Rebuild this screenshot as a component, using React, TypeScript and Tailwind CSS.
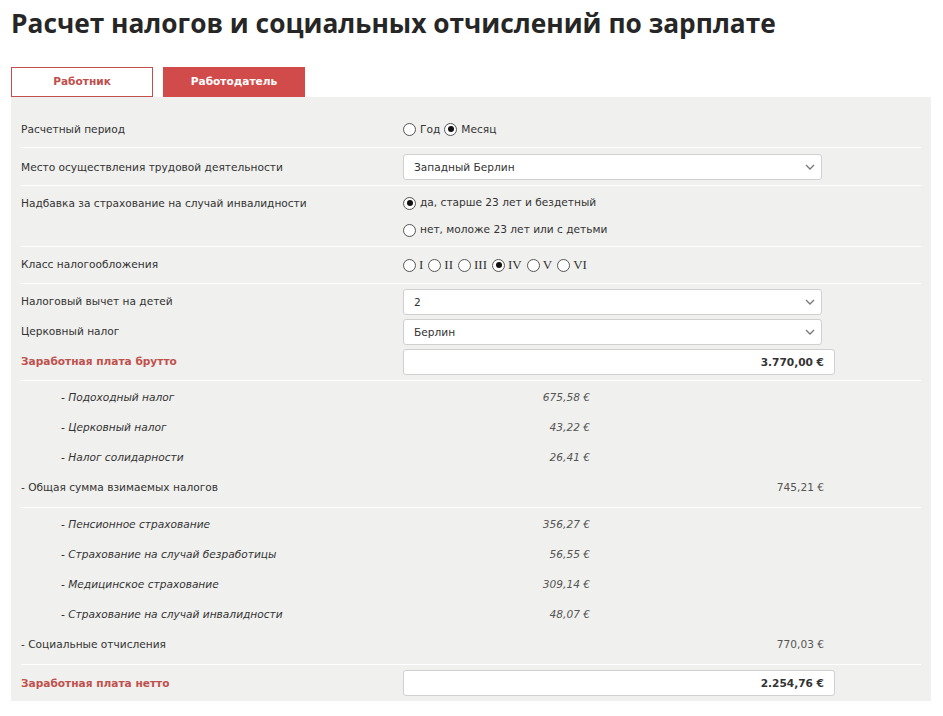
import React from "react";

const F = { fontFamily: '"DejaVu Sans", Verdana, sans-serif' };

function Radio({ checked }: { checked?: boolean }) {
  return (
    <span className="inline-flex h-[13px] w-[13px] shrink-0 items-center justify-center rounded-full border border-[#555] bg-white">
      {checked ? <span className="h-[6px] w-[6px] rounded-full bg-[#111]" /> : null}
    </span>
  );
}

function Chevron() {
  return (
    <svg width="10" height="6" viewBox="0 0 10 6" className="text-[#777]">
      <path d="M1 1l4 4 4-4" fill="none" stroke="currentColor" strokeWidth="1.3" />
    </svg>
  );
}

function Select({ value }: { value: string }) {
  return (
    <div className="flex h-[26px] w-[419px] items-center justify-between rounded-[3px] border border-[#d0d0d0] bg-white pl-[10px] pr-[6px] text-[10.6px] text-[#333]">
      <span className="pt-[1px]">{value}</span>
      <Chevron />
    </div>
  );
}

function ValueBox({ value }: { value: string }) {
  return (
    <div className="flex h-[26px] w-[432px] items-center justify-end rounded-[3px] border border-[#d0d0d0] bg-white pr-[10px] text-[10.6px] font-bold text-[#333]">
      <span className="pt-[1px]">{value}</span>
    </div>
  );
}

function SubRow({ label, value }: { label: string; value: string }) {
  return (
    <div className="flex h-[30px] items-center pt-[2px]">
      <div className="w-[382px] pl-[40px] text-[10.6px] italic text-[#333]">{label}</div>
      <div className="w-[187px] text-right text-[10.6px] italic text-[#555]">{value}</div>
    </div>
  );
}

function TotalRow({ label, value }: { label: string; value: string }) {
  return (
    <div className="flex h-[30px] items-center pt-[2px]">
      <div className="w-[382px] text-[10.6px] text-[#333]">{label}</div>
      <div className="w-[421px] text-right text-[10.6px] text-[#555]">{value}</div>
    </div>
  );
}

export default function App() {
  const label = "w-[382px] shrink-0 text-[10.6px] text-[#333]";
  const sep = "border-b border-white";
  return (
    <div className="min-h-[716px] bg-white" style={F}>
      <h1
        className="pl-[11px] pt-[3px] text-[26.3px] font-bold leading-[40px] text-[#262626]"
        style={{ fontFamily: '"Open Sans", "Noto Sans", sans-serif' }}
      >
        Расчет налогов и социальных отчислений по зарплате
      </h1>
      <div className="mt-[24px] flex gap-[10px] pl-[11px]">
        <div className="flex h-[30px] w-[142px] items-center justify-center border border-[#c0504d] bg-white text-[10.6px] font-bold text-[#c0504d]">
          Работник
        </div>
        <div className="flex h-[30px] w-[142px] items-center justify-center bg-[#d24b4b] text-[10.6px] font-bold text-white">
          Работодатель
        </div>
      </div>
      <div className="ml-[11px] w-[920px] bg-[#f0f0ee] px-[10px]">
        {/* Row 1 */}
        <div className={`flex h-[51px] items-center pt-[15px] ${sep}`}>
          <div className={label}>Расчетный период</div>
          <div className="flex items-center text-[10.6px] text-[#333]">
            <Radio />
            <span className="ml-[4px] mr-[4px]">Год</span>
            <Radio checked />
            <span className="ml-[4px]">Месяц</span>
          </div>
        </div>
        {/* Row 2 */}
        <div className={`flex items-center pb-[5px] pt-[6px] ${sep}`}>
          <div className={`${label} pt-[1px]`}>Место осуществления трудовой деятельности</div>
          <Select value="Западный Берлин" />
        </div>
        {/* Row 3 */}
        <div className={`flex pb-[5px] pt-[6px] ${sep}`}>
          <div className={`${label} flex h-[22px] items-center pt-[1px]`}>Надбавка за страхование на случай инвалидности</div>
          <div className="flex flex-col gap-[5px] text-[10.6px] text-[#333]">
            <div className="flex h-[22px] items-center">
              <Radio checked />
              <span className="ml-[4px]">да, старше 23 лет и бездетный</span>
            </div>
            <div className="flex h-[22px] items-center">
              <Radio />
              <span className="ml-[4px]">нет, моложе 23 лет или с детьми</span>
            </div>
          </div>
        </div>
        {/* Row 4 */}
        <div className={`flex h-[37px] items-center ${sep}`}>
          <div className={label}>Класс налогообложения</div>
          <div
            className="flex items-center text-[13px] text-[#333]"
            style={{ fontFamily: '"Liberation Serif", "Times New Roman", serif' }}
          >
            {["I", "II", "III", "IV", "V", "VI"].map((n) => (
              <span key={n} className="mr-[5px] flex items-center">
                <Radio checked={n === "IV"} />
                <span className="ml-[3px]">{n}</span>
              </span>
            ))}
          </div>
        </div>
        {/* Row 5 */}
        <div className={`flex flex-col gap-[4px] pb-[5px] pt-[5px] ${sep}`}>
          <div className="flex items-center">
            <div className={`${label} -mt-[1px]`}>Налоговый вычет на детей</div>
            <Select value="2" />
          </div>
          <div className="flex items-center">
            <div className={`${label} -mt-[1px]`}>Церковный налог</div>
            <Select value="Берлин" />
          </div>
          <div className="flex items-center">
            <div className="-mt-[1px] w-[382px] shrink-0 text-[10.6px] font-bold text-[#c0504d]">
              Заработная плата брутто
            </div>
            <ValueBox value="3.770,00 €" />
          </div>
        </div>
        {/* Taxes */}
        <div className={`pb-[5px] pt-[1px] ${sep}`}>
          <SubRow label="- Подоходный налог" value="675,58 €" />
          <SubRow label="- Церковный налог" value="43,22 €" />
          <SubRow label="- Налог солидарности" value="26,41 €" />
          <TotalRow label="- Общая сумма взимаемых налогов" value="745,21 €" />
        </div>
        {/* Social */}
        <div className={`pb-[5px] pt-[1px] ${sep}`}>
          <SubRow label="- Пенсионное страхование" value="356,27 €" />
          <SubRow label="- Страхование на случай безработицы" value="56,55 €" />
          <SubRow label="- Медицинское страхование" value="309,14 €" />
          <SubRow label="- Страхование на случай инвалидности" value="48,07 €" />
          <TotalRow label="- Социальные отчисления" value="770,03 €" />
        </div>
        {/* Net */}
        <div className="flex items-center pb-[5px] pt-[5px]">
          <div className="w-[382px] shrink-0 pt-[1px] text-[10.6px] font-bold text-[#c0504d]">
            Заработная плата нетто
          </div>
          <ValueBox value="2.254,76 €" />
        </div>
      </div>
    </div>
  );
}
